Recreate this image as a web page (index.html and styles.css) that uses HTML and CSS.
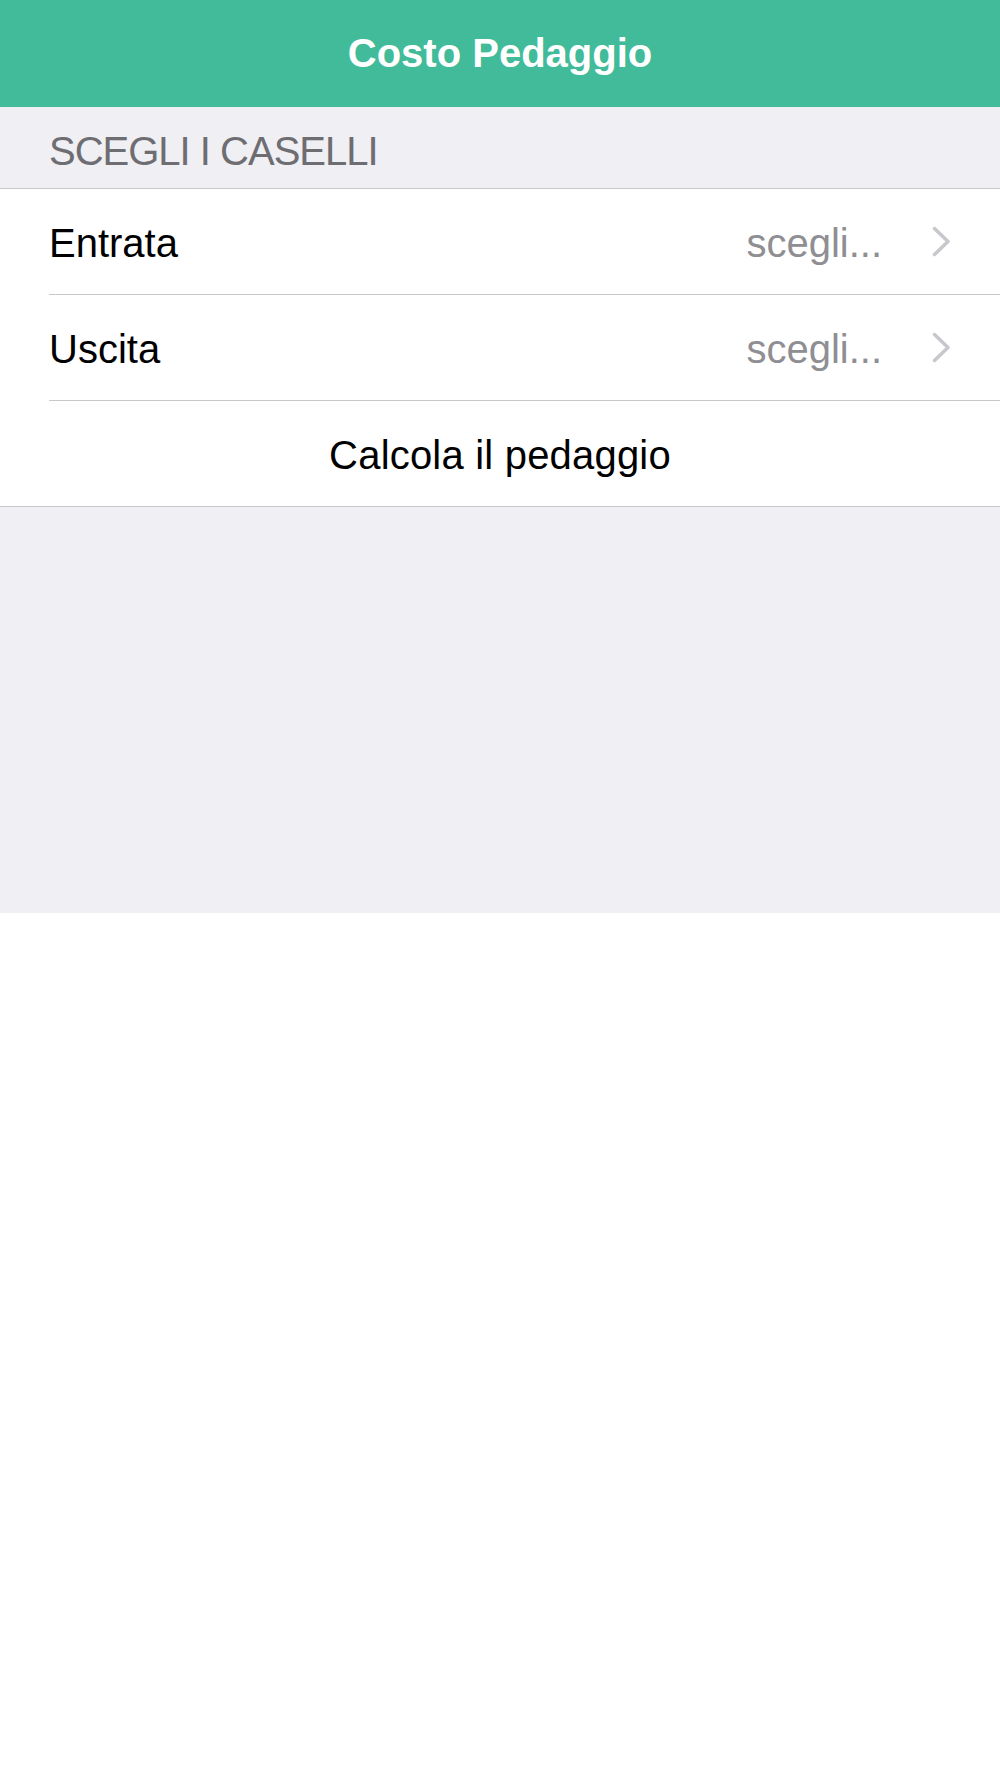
FILE: index.html
```html
<!DOCTYPE html>
<html lang="it">
<head>
    <meta charset="UTF-8">
    <meta name="viewport" content="width=device-width, initial-scale=1.0">
    <title>Costo Pedaggio</title>
    <link rel="stylesheet" href="styles.css">
</head>
<body>
    <div class="nav-bar">
        <h1 class="nav-title">Costo Pedaggio</h1>
    </div>
    <div class="table-view">
        <div class="section-header">SCEGLI I CASELLI</div>
        <div class="group">
            <div class="cell">
                <span class="cell-label">Entrata</span>
                <span class="cell-value">scegli...</span>
                <svg class="chevron" width="19" height="31" viewBox="0 0 19 31">
                    <polyline points="2.5,2.5 16,15.5 2.5,28.5" fill="none" stroke="#c7c7cc" stroke-width="3.5" stroke-linecap="round" stroke-linejoin="round"/>
                </svg>
            </div>
            <div class="cell">
                <span class="cell-label">Uscita</span>
                <span class="cell-value">scegli...</span>
                <svg class="chevron" width="19" height="31" viewBox="0 0 19 31">
                    <polyline points="2.5,2.5 16,15.5 2.5,28.5" fill="none" stroke="#c7c7cc" stroke-width="3.5" stroke-linecap="round" stroke-linejoin="round"/>
                </svg>
            </div>
            <div class="cell cell-button">Calcola il pedaggio</div>
        </div>
    </div>
</body>
</html>
```

FILE: styles.css
```css
* { box-sizing: border-box; margin: 0; padding: 0; }
body {
    font-family: 'Liberation Sans', Arial, sans-serif;
    background-color: #ffffff;
    color: #000;
}
.nav-bar {
    height: 107px;
    background-color: #41bb99;
    display: flex;
    justify-content: center;
    align-items: center;
}
.nav-title {
    color: #ffffff;
    font-size: 40px;
    font-weight: 700;
    line-height: 1;
    margin-top: -2px;
}
.table-view {
    background-color: #efeff4;
    height: 806px;
}
.section-header {
    height: 81px;
    padding: 0 49px 17px;
    display: flex;
    align-items: flex-end;
    font-size: 40px;
    letter-spacing: -1px;
    line-height: 1;
    color: #6d6d72;
}
.group {
    background-color: #ffffff;
    border-top: 1px solid #c8c7cc;
    border-bottom: 1px solid #c8c7cc;
}
.cell {
    height: 106px;
    margin-left: 49px;
    padding: 4px 49px 0 0;
    border-bottom: 1px solid #c8c7cc;
    display: flex;
    align-items: center;
    font-size: 40px;
}
.cell-label {
    flex: 1;
}
.cell-value {
    color: #8e8e93;
    margin-right: 50px;
}
.chevron {
    display: block;
    margin-top: -4px;
}
.cell-button {
    margin-left: 0;
    padding-right: 0;
    border-bottom: none;
    height: 105px;
    justify-content: center;
    letter-spacing: 0.2px;
}
```
